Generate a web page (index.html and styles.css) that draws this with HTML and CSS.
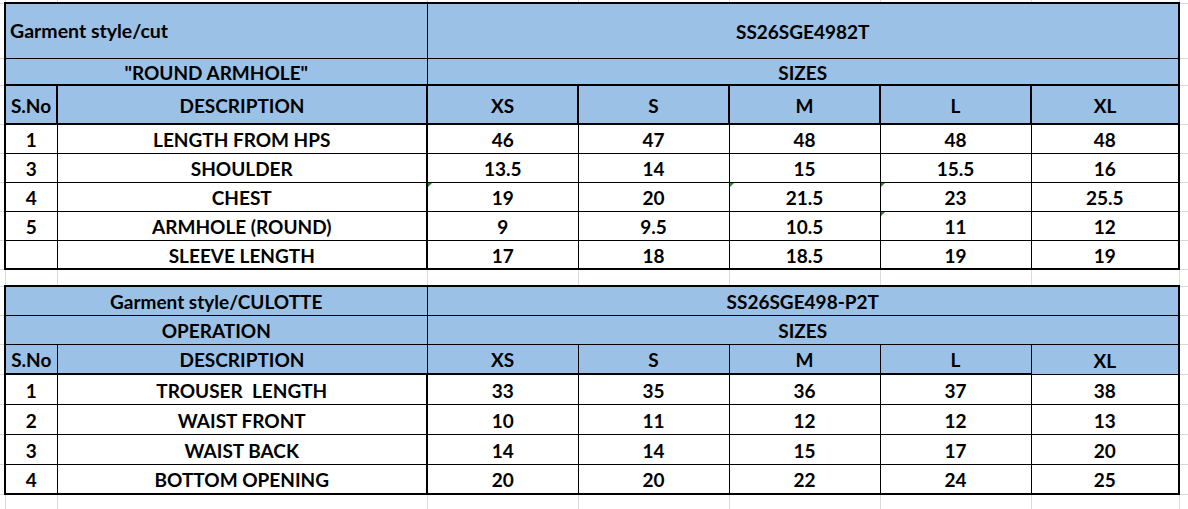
FILE: index.html
```html
<!DOCTYPE html>
<html>
<head>
<meta charset="utf-8">
<title>Size chart</title>
<link rel="stylesheet" href="styles.css">
</head>
<body>
<table class="sheet">
  <colgroup>
    <col class="c-ml"><col class="c-no"><col class="c-desc"><col class="c-sz"><col class="c-sz"><col class="c-sz"><col class="c-sz"><col class="c-xl"><col class="c-mr">
  </colgroup>
  <tr class="r-top"><td class="g"></td><td class="g"></td><td class="g"></td><td class="g"></td><td class="g"></td><td class="g"></td><td class="g"></td><td class="g"></td><td class="g"></td></tr>

  <tr class="h55"><td class="g"></td><td colspan="2" class="t hd left title bt bl">Garment style/cut</td><td colspan="5" class="t hd bt br">SS26SGE4982T</td><td class="g"></td></tr>
  <tr class="h27"><td class="g"></td><td colspan="2" class="t hd bl bb">"ROUND ARMHOLE"</td><td colspan="5" class="t hd br bb">SIZES</td><td class="g"></td></tr>
  <tr class="h39"><td class="g"></td><td class="t hd bl br bb">S.No</td><td class="t hd br bb">DESCRIPTION</td><td class="t hd br bb">XS</td><td class="t hd br bb">S</td><td class="t hd br bb">M</td><td class="t hd br bb">L</td><td class="t hd br bb">XL</td><td class="g"></td></tr>
  <tr class="h29"><td class="g"></td><td class="t bl">1</td><td class="t br">LENGTH FROM HPS</td><td class="t">46</td><td class="t">47</td><td class="t">48</td><td class="t">48</td><td class="t br">48</td><td class="g"></td></tr>
  <tr class="h29"><td class="g"></td><td class="t bl">3</td><td class="t br">SHOULDER</td><td class="t">13.5</td><td class="t">14</td><td class="t">15</td><td class="t">15.5</td><td class="t br">16</td><td class="g"></td></tr>
  <tr class="h29"><td class="g"></td><td class="t bl">4</td><td class="t br">CHEST</td><td class="t flag">19</td><td class="t">20</td><td class="t flag">21.5</td><td class="t flag">23</td><td class="t br">25.5</td><td class="g"></td></tr>
  <tr class="h29"><td class="g"></td><td class="t bl">5</td><td class="t br">ARMHOLE (ROUND)</td><td class="t">9</td><td class="t">9.5</td><td class="t">10.5</td><td class="t flag">11</td><td class="t br">12</td><td class="g"></td></tr>
  <tr class="h29"><td class="g"></td><td class="t bl bb"></td><td class="t br bb">SLEEVE LENGTH</td><td class="t bb">17</td><td class="t bb">18</td><td class="t bb">18.5</td><td class="t bb">19</td><td class="t br bb">19</td><td class="g"></td></tr>

  <tr class="h17 gap"><td class="g"></td><td class="g"></td><td class="g"></td><td class="g"></td><td class="g"></td><td class="g"></td><td class="g"></td><td class="g"></td><td class="g"></td></tr>

  <tr class="h29"><td class="g"></td><td colspan="2" class="t hd bt bl">Garment style/CULOTTE</td><td colspan="5" class="t hd bt br">SS26SGE498-P2T</td><td class="g"></td></tr>
  <tr class="h29"><td class="g"></td><td colspan="2" class="t hd bl">OPERATION</td><td colspan="5" class="t hd br">SIZES</td><td class="g"></td></tr>
  <tr class="h30"><td class="g"></td><td class="t hd bl bb">S.No</td><td class="t hd bb">DESCRIPTION</td><td class="t hd bb">XS</td><td class="t hd bb">S</td><td class="t hd bb">M</td><td class="t hd bb">L</td><td class="t hd br">XL</td><td class="g"></td></tr>
  <tr class="h30"><td class="g"></td><td class="t bl">1</td><td class="t br">TROUSER&nbsp; LENGTH</td><td class="t">33</td><td class="t">35</td><td class="t">36</td><td class="t">37</td><td class="t br">38</td><td class="g"></td></tr>
  <tr class="h30"><td class="g"></td><td class="t bl">2</td><td class="t br">WAIST FRONT</td><td class="t">10</td><td class="t">11</td><td class="t">12</td><td class="t">12</td><td class="t br">13</td><td class="g"></td></tr>
  <tr class="h30"><td class="g"></td><td class="t bl">3</td><td class="t br">WAIST BACK</td><td class="t">14</td><td class="t">14</td><td class="t">15</td><td class="t">17</td><td class="t br">20</td><td class="g"></td></tr>
  <tr class="h30"><td class="g"></td><td class="t bl bb">4</td><td class="t br bb">BOTTOM OPENING</td><td class="t bb">20</td><td class="t bb">20</td><td class="t bb">22</td><td class="t bb">24</td><td class="t br bb">25</td><td class="g"></td></tr>

  <tr class="h20 r-bottom"><td class="g"></td><td class="g"></td><td class="g"></td><td class="g"></td><td class="g"></td><td class="g"></td><td class="g"></td><td class="g"></td><td class="g"></td></tr>
</table>
</body>
</html>
```

FILE: styles.css
```css
html, body {
  margin: 0;
  padding: 0;
  background: #ffffff;
}

body {
  font-family: Lato, "Open Sans", "Liberation Sans", sans-serif;
  font-weight: 700;
  font-size: 19px;
  color: #000000;
  overflow: hidden;
}

.sheet {
  border-collapse: collapse;
  table-layout: fixed;
  width: 1188px;
}

.c-ml { width: 5px; }
.c-no { width: 52px; }
.c-desc { width: 370px; }
.c-sz { width: 151px; }
.c-xl { width: 148px; }
.c-mr { width: 9px; }

.sheet td {
  border: 1px solid #d9d9d9;
  padding: 3px 4px 0;
  text-align: center;
  vertical-align: middle;
  white-space: nowrap;
  overflow: hidden;
  line-height: 22px;
}

.sheet td.g {
  padding: 0;
  line-height: 0;
}

.sheet td.t {
  border: 1px solid #000000;
}

.sheet td.hd {
  background: #9bc2e6;
}

.sheet td.left {
  text-align: left;
  font-size: 19.5px;
}

.sheet td.title {
  padding-top: 1px;
}

.sheet td.bl { border-left-width: 2px; }
.sheet td.br { border-right-width: 2px; }
.sheet td.bt { border-top-width: 2px; }
.sheet td.bb { border-bottom-width: 2px; }

.r-top td { border-top: 0; }
.r-bottom td { border-bottom: 0; }
.sheet tr td:first-child.g { border-left: 0; }
.sheet tr td:last-child.g { border-right: 0; }

.r-top { height: 3px; }
.h17 { height: 17px; }
.h20 { height: 20px; }
.h27 { height: 27px; }
.h29 { height: 29px; }
.h30 { height: 30px; }
.h39 { height: 39px; }
.h55 { height: 55px; }

.sheet td.flag {
  position: relative;
}

.sheet td.flag::before {
  content: "";
  position: absolute;
  left: 0;
  top: 0;
  width: 0;
  height: 0;
  border-style: solid;
  border-width: 4px 4px 0 0;
  border-color: #1f8a2a transparent transparent transparent;
}
```
